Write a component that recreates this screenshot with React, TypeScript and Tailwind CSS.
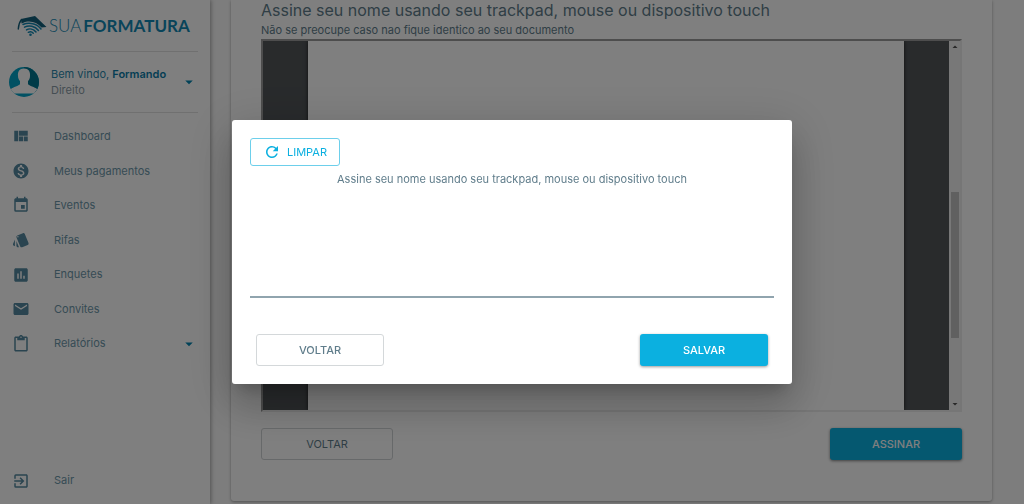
import { useEffect, useRef } from "react";
import type { IconType } from "react-icons";
import {
  MdArrowDropDown,
  MdAssessment,
  MdContentPaste,
  MdEmail,
  MdEvent,
  MdExitToApp,
  MdMonetizationOn,
  MdRefresh,
  MdStyle,
  MdViewQuilt,
} from "react-icons/md";

type MenuItem = { label: string; icon: IconType; expandable?: boolean };

const menu: MenuItem[] = [
  { label: "Dashboard", icon: MdViewQuilt },
  { label: "Meus pagamentos", icon: MdMonetizationOn },
  { label: "Eventos", icon: MdEvent },
  { label: "Rifas", icon: MdStyle },
  { label: "Enquetes", icon: MdAssessment },
  { label: "Convites", icon: MdEmail },
  { label: "Relatórios", icon: MdContentPaste, expandable: true },
];

function Logo() {
  return (
    <a href="#" className="flex h-[51px] items-center pl-[17px] text-[#1289b4]">
      <svg viewBox="0 0 30 22" className="h-[22px] w-[30px] shrink-0" fill="none" strokeLinecap="round">
        <path d="M4 4 L18 1 L29.500 12 L24.500 12.500 C20 7 12 5 6 8 L4.500 8.500 Z" fill="#12607c" />
        <path d="M4.500 4.500 C2.500 7 1.500 10 1.300 14" stroke="#12607c" strokeWidth="1.400" />
        <path d="M6 9.500 C12 6.800 20 8.500 24 14" stroke="#1289b4" strokeWidth="1.500" />
        <path d="M7.500 12.200 C12 10 18 11 21.500 15.500" stroke="#1289b4" strokeWidth="1.500" />
        <path d="M9.500 14.900 C12.500 13.200 16.500 14 19 17" stroke="#1289b4" strokeWidth="1.500" />
        <path d="M11.300 17.300 C13 16.400 15 16.600 16.300 18.300" stroke="#1289b4" strokeWidth="1.400" />
        <circle cx="13.500" cy="19.800" r="1.300" fill="#1289b4" />
      </svg>
      <span className="ml-[2px] font-['Lato'] text-[17px] leading-6">
        <span className="font-light">SUA</span>
        <span className="ml-[2px] font-bold">FORMATURA</span>
      </span>
    </a>
  );
}

function Avatar() {
  return (
    <svg viewBox="0 0 30 30" className="size-[30px] shrink-0">
      <defs>
        <clipPath id="avatar">
          <circle cx="15" cy="15" r="15" />
        </clipPath>
      </defs>
      <g clipPath="url(#avatar)">
        <rect width="30" height="30" fill="#02a2c6" />
        <path d="M15 0 H30 V25 H15 Z" fill="#007690" />
        <path
          d="M15 1.500 C19.500 1.500 21.500 4.500 21 9 C21 11.500 20 13 19 14 V17 C20 19 26 20 28 22 L30 23 V26.500 H0 V23 L2 22 C4 20 10 19 11 17 V14 C10 13 9 11.500 9 9 C8.500 4.500 10.500 1.500 15 1.500 Z"
          fill="#fff"
        />
      </g>
    </svg>
  );
}

function Sidebar() {
  return (
    <aside className="z-10 flex w-[210px] shrink-0 flex-col bg-white shadow-[1px_0_4px_rgba(0,0,0,0.35)]">
      <Logo />
      <button className="mx-3 flex h-[62px] items-center border-y border-[#e0e0e0] text-left">
        <span className="-ml-[3px] flex">
          <Avatar />
        </span>
        <span className="ml-3 flex-1 text-[11px] leading-4">
          <span className="block text-[#2a88ac]">
            Bem vindo, <b className="font-semibold text-[#0b7ca8]">Formando</b>
          </span>
          <span className="block text-[#8b9ca6]">Direito</span>
        </span>
        <MdArrowDropDown className="size-[18px] text-[#0284b0]" />
      </button>
      <nav className="mt-[6px] grid h-[242px] grid-rows-7">
        {menu.map(({ label, icon: Icon, expandable }) => (
          <a key={label} href="#" className="flex items-center pr-3 pl-3 text-[11px] text-[#6d97aa]">
            <Icon className="size-[18px] text-[#5589a0]" />
            <span className="ml-6 flex-1">{label}</span>
            {expandable && <MdArrowDropDown className="size-[18px] text-[#0284b0]" />}
          </a>
        ))}
      </nav>
      <a href="#" className="mt-auto mb-[6px] flex h-[35px] items-center pl-3 text-[11px] text-[#6d97aa]">
        <MdExitToApp className="size-[18px] text-[#5589a0]" />
        <span className="ml-6">Sair</span>
      </a>
    </aside>
  );
}

function DocumentFrame() {
  return (
    <div className="flex h-[373px] border-2 border-[#ececec] border-t-[#9a9a9a] border-l-[#9a9a9a]">
      <div className="flex flex-1 overflow-hidden bg-[#525659] px-[45px]">
        <div className="flex-1 bg-white shadow-[0_0_4px_rgba(0,0,0,0.7)]" />
      </div>
      <div className="flex w-[11px] flex-col items-center bg-[#f1f1f1]">
        <MdArrowDropDown className="size-3 rotate-180 text-[#505050]" />
        <div className="mt-[139px] h-[146px] w-2 bg-[#c1c1c1]" />
        <MdArrowDropDown className="mt-auto size-3 text-[#505050]" />
      </div>
    </div>
  );
}

function SignatureDialog() {
  const canvasRef = useRef<HTMLCanvasElement>(null);
  const drawing = useRef(false);

  useEffect(() => {
    const canvas = canvasRef.current;
    if (!canvas) return;
    canvas.width = canvas.clientWidth;
    canvas.height = canvas.clientHeight;
  }, []);

  function start(e: React.PointerEvent) {
    const ctx = canvasRef.current?.getContext("2d");
    if (!ctx) return;
    drawing.current = true;
    ctx.beginPath();
    ctx.moveTo(e.nativeEvent.offsetX, e.nativeEvent.offsetY);
  }

  function move(e: React.PointerEvent) {
    const ctx = canvasRef.current?.getContext("2d");
    if (!ctx || !drawing.current) return;
    ctx.lineTo(e.nativeEvent.offsetX, e.nativeEvent.offsetY);
    ctx.stroke();
  }

  function clear() {
    const canvas = canvasRef.current;
    canvas?.getContext("2d")?.clearRect(0, 0, canvas.width, canvas.height);
  }

  return (
    <div className="fixed inset-0 z-20 flex items-center justify-center bg-black/50">
      <div
        role="dialog"
        aria-labelledby="signature-title"
        className="w-full max-w-[560px] rounded-[3px] bg-white p-[18px] shadow-[0_11px_15px_-7px_rgba(0,0,0,0.2),0_24px_38px_3px_rgba(0,0,0,0.14),0_9px_46px_8px_rgba(0,0,0,0.12)]"
      >
        <button
          onClick={clear}
          className="flex h-7 items-center rounded-[3px] border border-[#6dcfeb] px-3 text-[11px] text-[#0bb0e0]"
        >
          <MdRefresh className="mr-[6px] size-[18px]" />
          LIMPAR
        </button>
        <h2 id="signature-title" className="text-center text-[11px] leading-[26px] text-[#607d8b]">
          Assine seu nome usando seu trackpad, mouse ou dispositivo touch
        </h2>
        <canvas
          ref={canvasRef}
          onPointerDown={start}
          onPointerMove={move}
          onPointerUp={() => (drawing.current = false)}
          className="block h-[106px] w-full border-b-2 border-[#90a4ae]"
        />
        <div className="mt-9 flex justify-between px-[6px]">
          <button className="h-8 w-32 rounded-[3px] border border-[#d4d8da] text-[11px] font-medium text-[#607d8b]">
            VOLTAR
          </button>
          <button className="h-8 w-32 rounded-[3px] bg-[#0bb0e0] text-[11px] font-medium text-white shadow-[0_1px_3px_rgba(0,0,0,0.4)]">
            SALVAR
          </button>
        </div>
      </div>
    </div>
  );
}

export default function App() {
  return (
    <div className="flex h-screen overflow-hidden bg-[#fafafa] font-['Inter',sans-serif]">
      <Sidebar />
      <main className="min-w-0 flex-1 pr-8 pl-[21px]">
        <section className="rounded-b-[3px] bg-white px-[30px] pb-[41px] shadow-[0_1px_3px_rgba(0,0,0,0.35)]">
          <h1 className="text-[16px] leading-5 text-[#607d8b]">
            Assine seu nome usando seu trackpad, mouse ou dispositivo touch
          </h1>
          <p className="mt-px text-[11px] leading-[18px] text-[#607d8b]">
            Não se preocupe caso nao fique identico ao seu documento
          </p>
          <DocumentFrame />
          <div className="mt-4 flex justify-between">
            <button className="h-8 w-[132px] rounded-[3px] border border-[#cfd3d5] text-[11px] text-[#607d8b]">
              VOLTAR
            </button>
            <button className="h-8 w-[132px] rounded-[3px] bg-[#0bb0e0] text-[11px] font-medium text-white shadow-[0_1px_3px_rgba(0,0,0,0.5)]">
              ASSINAR
            </button>
          </div>
        </section>
      </main>
      <SignatureDialog />
    </div>
  );
}
